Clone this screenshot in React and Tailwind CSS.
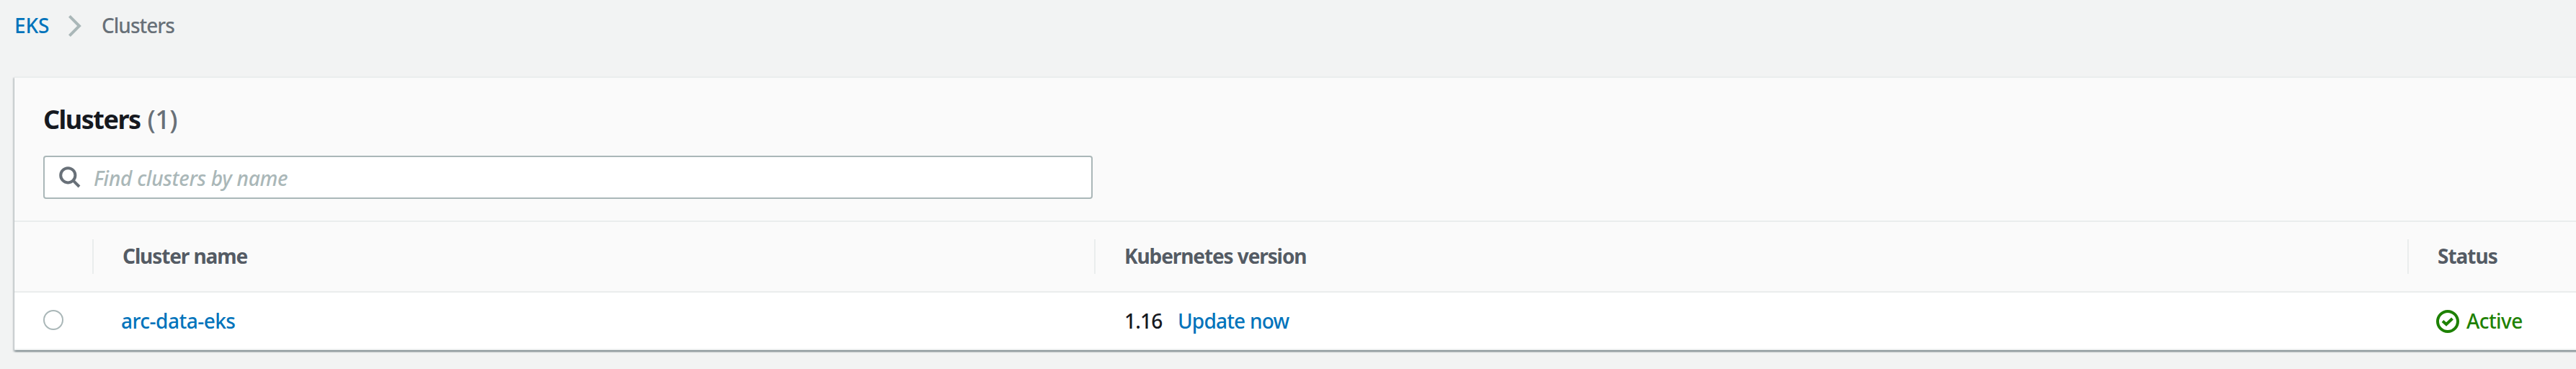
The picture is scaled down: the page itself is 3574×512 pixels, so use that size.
import React from "react";

function HeaderCell({ className, children }) {
  return (
    <div className={`flex h-12 items-center border-l-2 border-[#eaeded] pb-0.5 pl-10 text-[28px] font-bold leading-[44px] text-[#545b64] ${className}`}>
      {children}
    </div>
  );
}

export default function App() {
  return (
    <div className="h-[512px] w-[3574px] overflow-hidden bg-[#f2f3f3] font-['Noto_Sans','Open_Sans',sans-serif] text-[28px] font-medium leading-[44px] text-[#16191f]">
      <nav className="flex h-[72px] items-center pl-5">
        <a className="w-[75px] pb-0.5 tracking-[-0.1px] text-[#0073bb]">EKS</a>
        <svg className="h-[30px] w-[18px]" viewBox="0 0 18 30" fill="none" stroke="#aab7b8" strokeWidth="4">
          <path d="M1.4 1.4 15 15 1.4 28.6" />
        </svg>
        <span className="ml-[28px] pb-0.5 tracking-[-1px] text-[#687078]">Clusters</span>
      </nav>

      <main className="ml-5 mt-[34px] w-[3600px] border-t-2 border-[#eaeded] bg-white shadow-[0_2px_2px_0_rgba(0,28,36,0.3),2px_2px_2px_0_rgba(0,28,36,0.15),-2px_2px_2px_0_rgba(0,28,36,0.15)]">
        <header className="h-[200px] border-b-2 border-[#eaeded] bg-[#fafafa] pl-10 pt-[31px]">
          <h2 className="flex h-[77px] gap-[10px] text-[36px] font-bold leading-[54px] tracking-[-1.5px]">
            <span>Clusters</span>
            <span className="font-medium tracking-[-0.6px] text-[#687078]">(1)</span>
          </h2>
          <div className="flex h-[60px] w-[1456px] items-center rounded-[4px] border-2 border-[#aab7b8] bg-white pl-5">
            <svg className="h-[30px] w-[30px]" viewBox="0 0 30 30" fill="none" stroke="#687078" strokeWidth="4">
              <circle cx="12.3" cy="12.3" r="10.1" />
              <path d="M19.4 19.4 28 28" />
            </svg>
            <span className="ml-[18px] mt-px italic tracking-[-0.25px] text-[#aab7b8]">Find clusters by name</span>
          </div>
        </header>

        <div className="flex h-[98px] items-center border-b-2 border-[#eaeded] bg-[#fafafa]">
          <div className="w-[108px]" />
          <HeaderCell className="w-[1390px] tracking-[-1.1px]">Cluster name</HeaderCell>
          <HeaderCell className="w-[1822px] tracking-[-1.1px]">Kubernetes version</HeaderCell>
          <HeaderCell className="w-[280px] tracking-[-1px]">Status</HeaderCell>
        </div>

        <div className="flex h-20 items-center border-b-2 border-[#eaeded]">
          <div className="w-[148px] pl-10">
            <div className="mb-0.5 h-7 w-7 rounded-full border-2 border-[#aab7b8] bg-white" />
          </div>
          <a className="w-[1392px] tracking-[-0.5px] text-[#0073bb]">arc-data-eks</a>
          <div className="flex w-[1820px]">
            <span className="w-[74px] tracking-[-0.8px]">1.16</span>
            <a className="tracking-[-0.8px] text-[#0073bb]">Update now</a>
          </div>
          <div className="flex items-center text-[#1d8102]">
            <svg className="mt-0.5 h-8 w-8" viewBox="0 0 32 32" fill="none" stroke="currentColor" strokeWidth="4">
              <circle cx="16" cy="16" r="14" />
              <path d="m9 15.5 5 4.500L22.500 12" />
            </svg>
            <span className="ml-[10px] tracking-[-0.6px]">Active</span>
          </div>
        </div>
      </main>
    </div>
  );
}
